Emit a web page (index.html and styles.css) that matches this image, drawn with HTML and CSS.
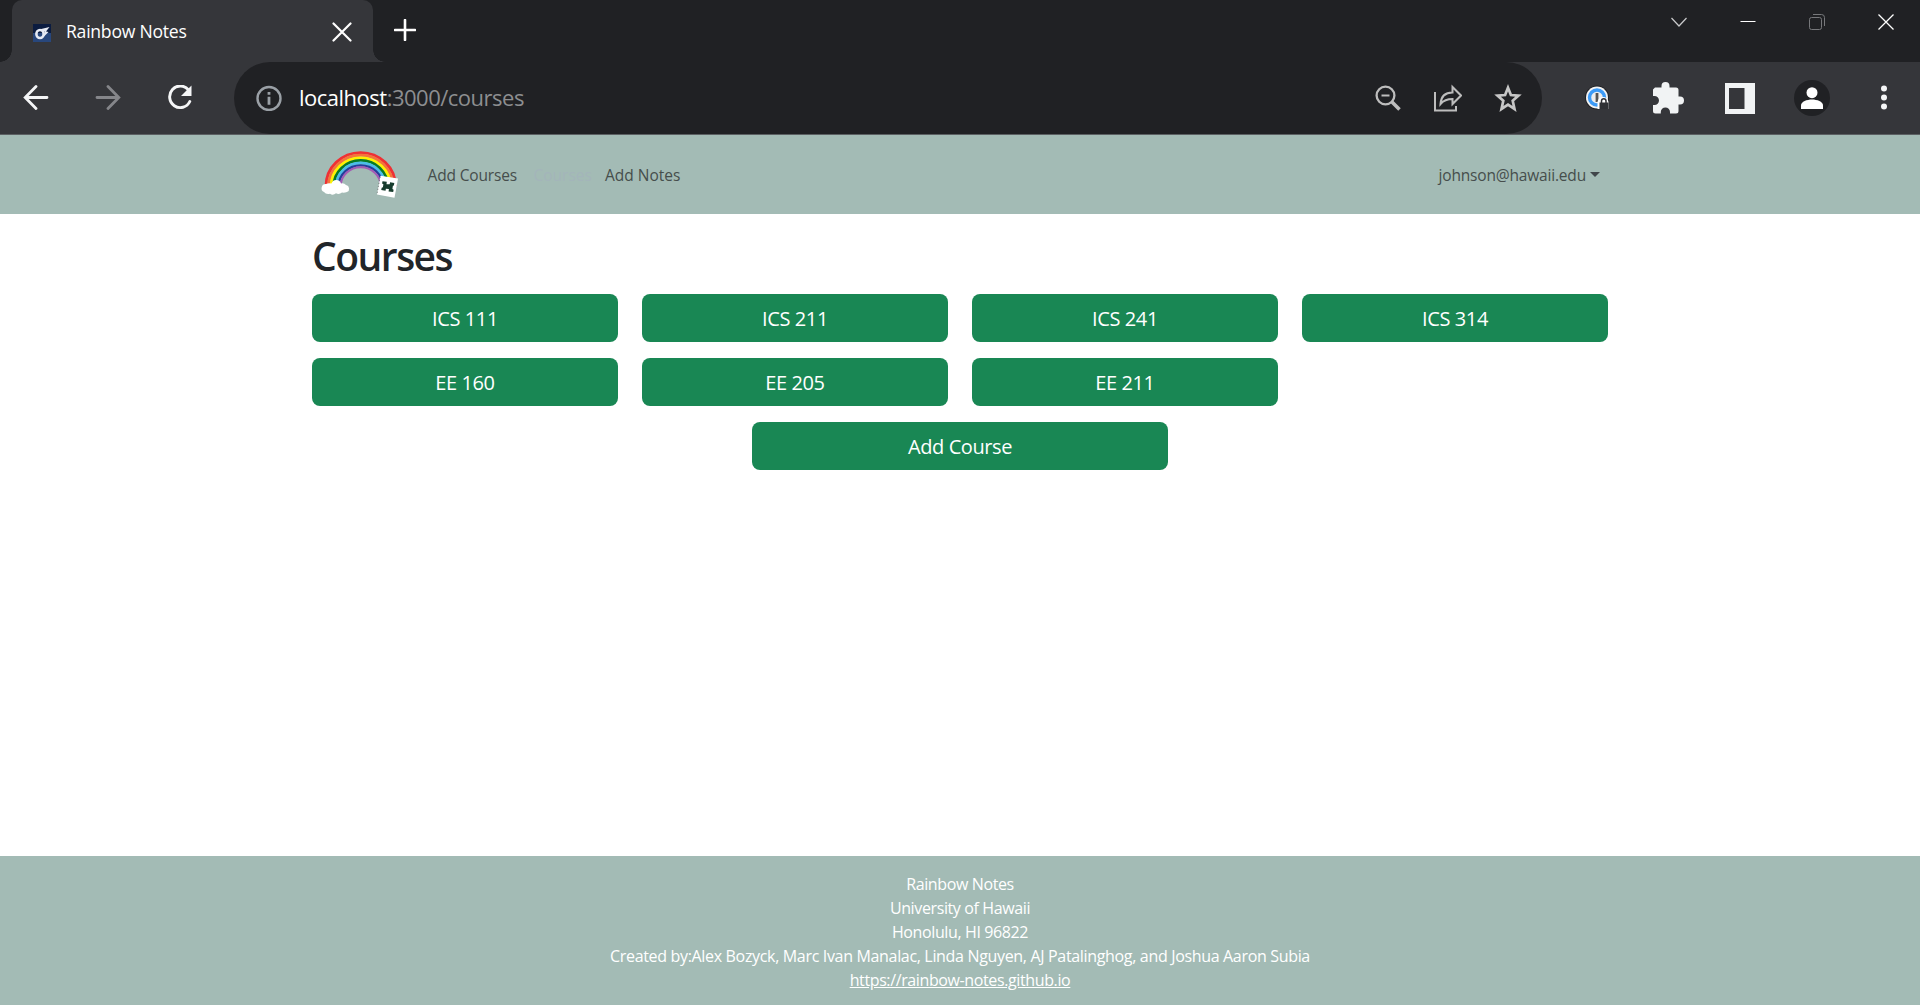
FILE: index.html
```
<!DOCTYPE html>
<html lang="en">
<head>
<meta charset="utf-8">
<title>Rainbow Notes</title>
<link rel="stylesheet" href="styles.css">
</head>
<body>
<div class="tabs">
  <div class="tab">
    <svg class="favicon" width="18" height="18" viewBox="0 0 18 18"><rect width="18" height="18" fill="#0b1c40"/><rect y="9" width="18" height="9" fill="#28477c"/><ellipse cx="7" cy="10" rx="3.600" ry="4" fill="none" stroke="#e6eaf3" stroke-width="2.600"/><path d="M6 5.500L16.500 3L13 7.500L15.500 8L10.500 13L11.500 7.500z" fill="#e6eaf3"/></svg>
    <span class="tab-title">Rainbow Notes</span>
    <svg class="tab-close" width="20" height="20" viewBox="0 0 20 20"><path d="M1.5 1.5L18.5 18.5M18.5 1.5L1.5 18.5" stroke="#fff" stroke-width="2.2" stroke-linecap="round"/></svg>
  </div>
  <svg class="tab-new" width="22" height="22" viewBox="0 0 22 22"><path d="M11 1v20M1 11h20" stroke="#fff" stroke-width="2.6" stroke-linecap="round"/></svg>
  <div class="window-controls">
    <svg width="16" height="16" viewBox="0 0 16 16"><path d="M.5 4L8 12L15.5 4" fill="none" stroke="#c9cacc" stroke-width="1.2"/></svg>
    <svg width="16" height="16" viewBox="0 0 16 16"><path d="M.5 7.500h15" stroke="#fff"/></svg>
    <svg width="16" height="16" viewBox="0 0 16 16"><g fill="none" stroke="#77787b"><rect x=".5" y="3.500" width="12" height="12" rx="2"/><path d="M4 .5h8.500a3 3 0 0 1 3 3V12"/></g></svg>
    <svg width="16" height="16" viewBox="0 0 16 16"><path d="M.5 .5l15 15M15.500 .5l-15 15" stroke="#fff" stroke-width="1.3"/></svg>
  </div>
</div>
<div class="toolbar">
  <div class="history">
    <svg width="26" height="26" viewBox="0 0 26 26"><path d="M24 12.500H2.500M13 1.500L2.200 12.500L13 23.500" fill="none" stroke="#f5f6f7" stroke-width="2.800" stroke-linecap="round"/></svg>
    <svg width="26" height="26" viewBox="0 0 26 26"><path d="M2 12.500h21.500M13 1.500l10.800 11l-10.800 11" fill="none" stroke="#85868a" stroke-width="2.800" stroke-linecap="round"/></svg>
    <svg width="26" height="26" viewBox="0 0 26 26"><path d="M21.500 5A10.600 10.800 0 1 0 22.800 16.500" fill="none" stroke="#f5f6f7" stroke-width="2.900" stroke-linecap="round"/><path d="M24.500 .5v10.500H14z" fill="#f5f6f7"/></svg>
  </div>
  <div class="address">
    <svg class="info" width="26" height="26" viewBox="0 0 26 26"><circle cx="13" cy="13.500" r="11.500" fill="none" stroke="#9aa0a6" stroke-width="2.400"/><path d="M13 11.800v8M13 7v2.800" stroke="#9aa0a6" stroke-width="2.800"/></svg>
    <span class="url">localhost<span class="url-path">:3000/courses</span></span>
    <div class="address-actions">
      <svg width="28" height="28" viewBox="0 0 28 28"><g fill="none" stroke="#bdbdbd"><circle cx="11.500" cy="11.500" r="8.900" stroke-width="2.300"/><path d="M7.500 11.500h8" stroke-width="2"/><path d="M18 18l7.500 7.500" stroke-width="3.500"/></g></svg>
      <svg width="28" height="28" viewBox="0 0 28 28"><g fill="none" stroke="#bdbdbd" stroke-width="2"><path d="M1 8v18.500h21V22"/><path d="M6.500 20C7 12 12 8.500 18.500 8.500V3L27 11.500L18.500 20v-5C13 15 9.500 16.500 6.500 20z"/></g></svg>
      <svg width="28" height="28" viewBox="0 0 28 28"><path d="M14 3.700L16.900 11L24.500 11.600L18.700 16.800L20.500 25L14 20.700L7.500 25L9.300 16.800L3.500 11.600L11.100 11z" fill="none" stroke="#c6c6c6" stroke-width="2.700"/></svg>
    </div>
  </div>
  <div class="extensions">
    <svg width="24" height="26" viewBox="0 0 24 26"><circle cx="12" cy="12.500" r="12" fill="#202124"/><circle cx="12" cy="12.500" r="11" fill="#f2f2f2"/><circle cx="12" cy="12.500" r="7.500" fill="#eee" stroke="#3c9bf7" stroke-width="3.400"/><path d="M12 8v9" stroke="#555" stroke-width="2.800"/><path d="M12.500 24v-7q1-5 5.500-5t5.500 5v7z" fill="#fff"/><path d="M14.500 17.500h9V24h-9z" fill="#303135"/><path d="M16.500 18v-2a2 2 0 0 1 4.500 0v2" fill="none" stroke="#303135" stroke-width="1.500"/></svg>
    <svg class="puzzle" width="33" height="34" viewBox="0 0 33 34"><path d="M3 6.500h6.500V5a4 4 0 0 1 8 0v1.500H24a2.500 2.500 0 0 1 2.500 2.500v6.500H28a4 4 0 0 1 0 8h-1.500v6.500A2.500 2.500 0 0 1 24 32.500H18V31a4.600 4.600 0 0 0-9.200 0v1.500H3.500A2.500 2.500 0 0 1 1 30v-6h1.500a4.500 4.500 0 0 0 0-9H1V8.500z" fill="#f1f3f4"/></svg>
    <svg class="panel" width="30" height="31" viewBox="0 0 30 31"><path d="M0 0h30v31H0zM4 5v21h15.500V5z" fill="#f1f3f4" fill-rule="evenodd"/></svg>
    <svg class="avatar" width="36" height="36" viewBox="0 0 36 36"><circle cx="18" cy="18" r="18" fill="#202124"/><circle cx="18" cy="12.700" r="5.500" fill="#fff"/><path d="M7 29v-3.500C7 21.500 13 19.500 18 19.500S29 21.500 29 25.500V29z" fill="#fff"/></svg>
    <svg width="6" height="26" viewBox="0 0 6 26"><g fill="#f5f6f7"><circle cx="3" cy="3.500" r="3"/><circle cx="3" cy="12.500" r="3"/><circle cx="3" cy="21.500" r="3"/></g></svg>
  </div>
</div>
<nav class="navbar">
  <div class="container nav-row">
    <svg class="logo" width="80" height="48" viewBox="0 0 80 48">
      <g fill="none" stroke-width="2.800">
        <path d="M6 35A34.700 33.400 0 0 1 75.400 35" stroke="#ef3034"/>
        <path d="M8.600 35A32.100 30.800 0 0 1 72.800 35" stroke="#f5743a"/>
        <path d="M11.200 35A29.500 28.200 0 0 1 70.200 35" stroke="#fff200"/>
        <path d="M13.800 35A26.900 25.600 0 0 1 67.600 35" stroke="#087a22"/>
        <path d="M16.400 35A24.300 23 0 0 1 65 35" stroke="#4bbde8"/>
        <path d="M18.700 35A22 20.700 0 0 1 62.700 35" stroke="#253f9b" stroke-width="2.200"/>
        <path d="M20.700 35A20 18.700 0 0 1 60.700 35" stroke="#a45bb5" stroke-width="2"/>
      </g>
      <path d="M4 41a4.200 4.200 0 0 1 2-8a6 5 0 0 1 5.500-.5a5 5 0 0 1 9.500 0a5 5 0 0 1 5 1.500a3.700 3.700 0 0 1 1 7q-3 1-5 .5q-3 2.500-6 .8q-3 2.500-6 .5q-4 1-6-1.800z" fill="#fff"/>
      <path d="M60.500 24.700l17.500 2.800-3.500 19.300-17.500-3.300z" fill="#fff"/>
      <path d="M60 26l-3 17" stroke="#777" stroke-width="1" stroke-dasharray="1 2"/>
      <path d="M62.500 30.200l4.300.6-.3 2.500h3.200l.4-2 4.200.8-.4 2.300-1 .4-.5 3.200 1.200.8-.4 2.300-4.600-.7.300-2.300-3-.3-.4 2-4.300-.8.500-2.300 1.200-.4.500-3-1.300-.8z" fill="#173c2d"/>
    </svg>
    <a class="nav-link nav-courses">Add Courses</a>
    <a class="nav-link nav-faint">Courses</a>
    <a class="nav-link nav-notes">Add Notes</a>
    <a class="nav-link account"><span class="email">johnson@hawaii.edu</span><span class="caret"></span></a>
  </div>
</nav>
<main class="container">
  <h1><span>Courses</span></h1>
  <div class="course-grid">
    <button><span>ICS 111</span></button>
    <button><span>ICS 211</span></button>
    <button><span>ICS 241</span></button>
    <button><span>ICS 314</span></button>
    <button><span>EE 160</span></button>
    <button><span>EE 205</span></button>
    <button><span>EE 211</span></button>
  </div>
  <button class="add-course"><span>Add Course</span></button>
</main>
<footer>
  <span>Rainbow Notes</span>
  <span>University of Hawaii</span>
  <span>Honolulu, HI 96822</span>
  <span class="credits">Created by:Alex Bozyck, Marc Ivan Manalac, Linda Nguyen, AJ Patalinghog, and Joshua Aaron Subia</span>
  <a class="site-link">https://rainbow-notes.github.io</a>
</footer>
</body>
</html>
```
FILE: styles.css
```
* { box-sizing: border-box; }
body {
  margin: 0;
  height: 1005px;
  display: flex;
  flex-direction: column;
  overflow: hidden;
  background: #fff;
  color: #212529;
  font-family: "Open Sans", "Noto Sans", sans-serif;
  font-size: 16px;
  line-height: 24px;
}
svg { display: block; flex: none; }
span, a { white-space: nowrap; }

.tabs {
  height: 62px;
  flex: none;
  display: flex;
  background: #202124;
}
.tab {
  width: 361px;
  margin-left: 12px;
  display: flex;
  align-items: center;
  position: relative;
  padding: 1px 21px 0;
  border-radius: 10px 10px 0 0;
  background: #35363a;
  color: #fff;
}
.tab::before, .tab::after {
  content: "";
  position: absolute;
  bottom: 0;
  width: 12px;
  height: 12px;
}
.tab::before { left: -12px; background: radial-gradient(circle at 0 0, #202124 11.500px, #35363a 12px); }
.tab::after { right: -12px; background: radial-gradient(circle at 100% 0, #202124 11.500px, #35363a 12px); }
.favicon { margin-top: 2px; }
.tab-title { margin: -2px 0 0 15px; font-size: 17.600px; letter-spacing: -0.25px; }
.tab-close { margin-left: auto; }
.tab-new { margin: 19px 0 0 21px; }
.window-controls { display: flex; gap: 53px; margin: 14px 26px 0 auto; }

.toolbar {
  height: 73px;
  flex: none;
  display: flex;
  border-bottom: 1px solid #5c6063;
  background: #35363a;
}
.history {
  width: 234px;
  display: flex;
  gap: 46px;
  padding: 23px 0 0 23px;
}
.address {
  width: 1308px;
  display: flex;
  align-items: center;
  border-radius: 36px;
  padding: 0 20px 0 22px;
  background: #202124;
}
.url { margin: -2px 0 0 17px; color: #fff; font-size: 22px; letter-spacing: -0.5px; }
.url-path { color: #8d8e90; }
.address-actions { display: flex; gap: 32px; margin-left: auto; }
.extensions {
  flex: 1;
  display: flex;
  align-items: center;
  padding-left: 43px;
}
.puzzle { margin-left: 43px; }
.panel { margin: 0 39px 0 40px; }
.avatar { margin-right: 51px; }

.navbar { height: 79px; flex: none; background: #a3bbb5; }
.container { width: 1296px; margin: 0 auto; }
.nav-row { height: 79px; display: flex; align-items: center; }
.logo { margin-left: 8px; }
.nav-link { color: #464e4c; font-size: 15.500px; }
.nav-courses { margin-left: 27.500px; width: 106px; letter-spacing: -0.15px; }
.nav-faint { width: 71.500px; color: #a3b5ba; }
.account { margin-left: auto; margin-right: 8px; display: flex; align-items: center; }
.email { letter-spacing: -0.18px; }
.caret { margin-left: 4px; border: 5px solid transparent; border-top-color: #40464a; border-bottom: 0; }

h1 {
  margin: 18px 0 14px;
  font-size: 39px;
  line-height: 48px;
  font-weight: 600;
  font-family: "Open Sans", "Noto Sans", sans-serif;
  letter-spacing: -1.5px;
}
.course-grid {
  display: grid;
  grid-template-columns: repeat(4, 306px);
  gap: 16px 24px;
}
button {
  height: 48px;
  padding: 2px 0 0;
  border: 0;
  border-radius: 8px;
  background: #198754;
  color: #fff;
  font: 20px/30px "Open Sans", "Noto Sans", sans-serif;
  letter-spacing: -0.4px;
}
.add-course { display: block; width: 416px; margin: 16px auto 0; }

footer {
  height: 149px;
  flex: none;
  display: flex;
  flex-direction: column;
  align-items: center;
  margin-top: auto;
  padding-top: 16px;
  background: #a3bbb5;
  color: #fff;
  letter-spacing: -0.38px;
}
.credits { letter-spacing: -0.33px; }
.site-link { text-decoration: underline; }
```
